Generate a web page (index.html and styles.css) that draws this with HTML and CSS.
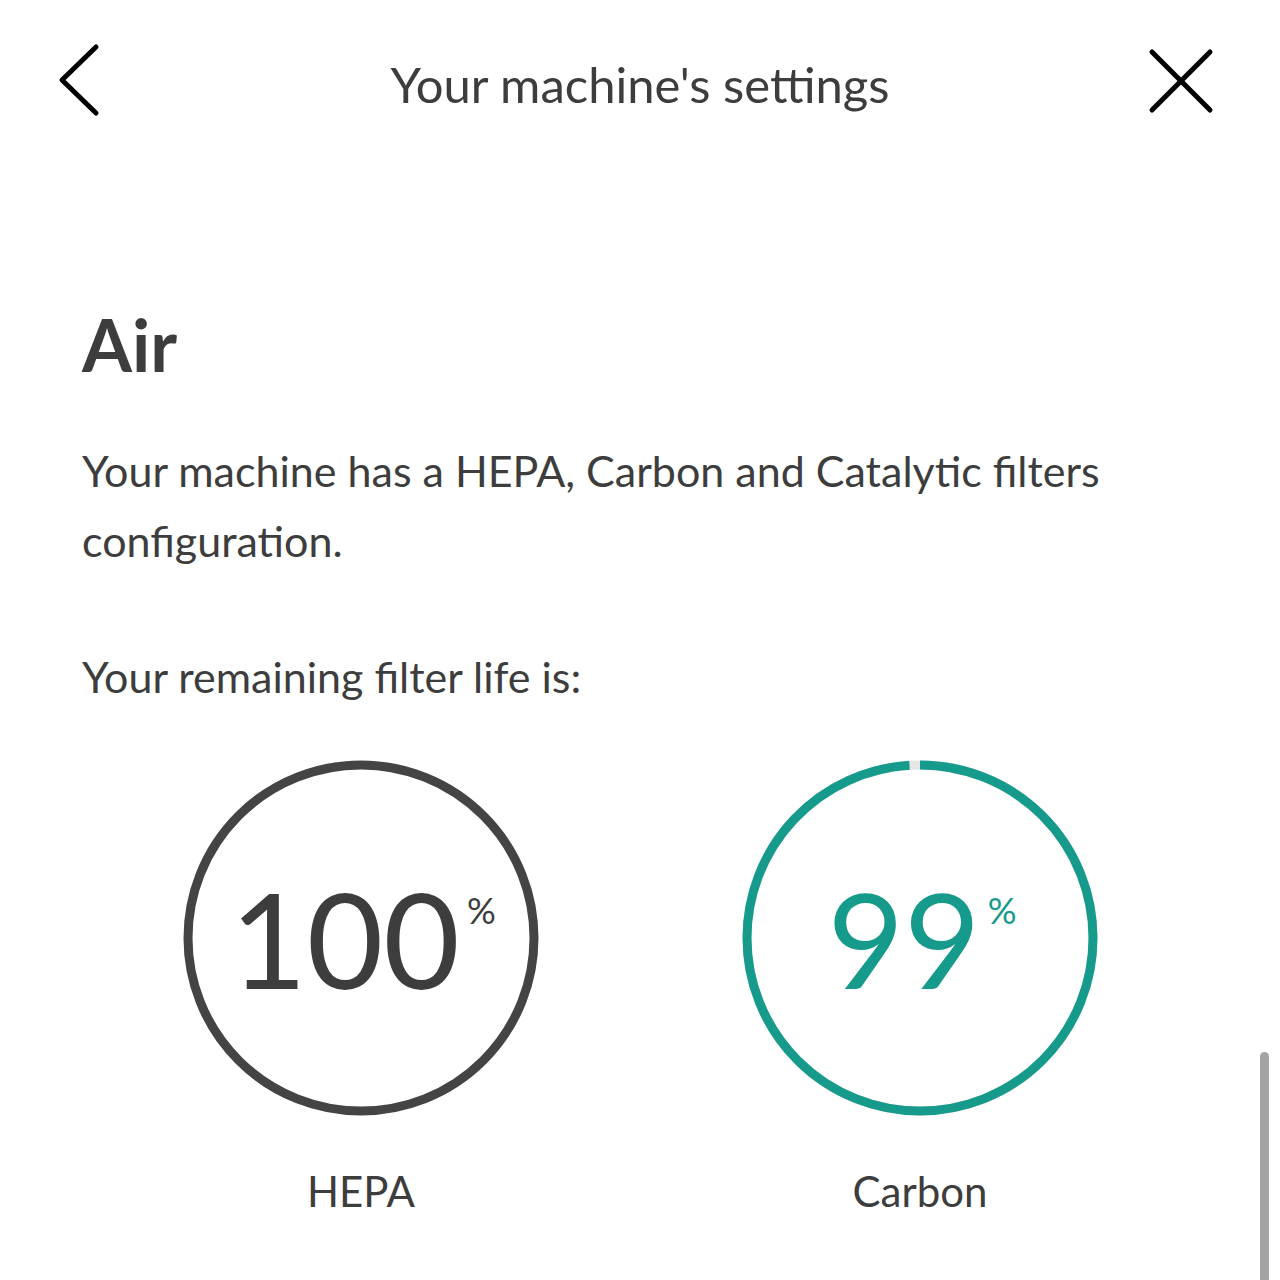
FILE: index.html
```html
<!DOCTYPE html>
<html lang="en">
  <head>
    <meta charset="UTF-8" />
    <meta name="viewport" content="width=device-width, initial-scale=1.0" />
    <title>Your machine's settings</title>
    <link rel="stylesheet" href="styles.css">
  </head>
  <body>
    <div class="screen">
      <header class="top-bar">
        <button class="icon-btn back-btn" aria-label="Back">
          <svg width="48" height="76" viewBox="0 0 48 76">
            <polyline points="38,4 4,37 38,70" fill="none" stroke="#000" stroke-width="5" stroke-linecap="round" stroke-linejoin="round" />
          </svg>
        </button>
        <h1 class="title">Your machine's settings</h1>
        <button class="icon-btn close-btn" aria-label="Close">
          <svg width="70" height="70" viewBox="0 0 70 70">
            <line x1="6" y1="6" x2="64" y2="64" stroke="#000" stroke-width="5" stroke-linecap="round" />
            <line x1="64" y1="6" x2="6" y2="64" stroke="#000" stroke-width="5" stroke-linecap="round" />
          </svg>
        </button>
      </header>

      <main class="content">
        <h2 class="section-title">Air</h2>
        <p class="text">Your machine has a HEPA, Carbon and Catalytic filters configuration.</p>
        <p class="text remaining">Your remaining filter life is:</p>

        <div class="gauges">
          <div class="gauge">
            <div class="ring">
              <svg width="356" height="356" viewBox="0 0 356 356">
                <circle cx="178" cy="178" r="173" fill="none" stroke="#444" stroke-width="9" />
              </svg>
              <div class="value">
                <span class="num">100</span><span class="pct">%</span>
              </div>
            </div>
            <div class="label">HEPA</div>
          </div>

          <div class="gauge teal">
            <div class="ring">
              <svg width="356" height="356" viewBox="0 0 356 356">
                <circle cx="178" cy="178" r="173" fill="none" stroke="#e6e6e6" stroke-width="9" />
                <!-- 99% of 2*pi*173 = 1087 -->
                <circle cx="178" cy="178" r="173" fill="none" stroke="#169a8b" stroke-width="9"
                  stroke-dasharray="1076 1087" transform="rotate(-90 178 178)" />
              </svg>
              <div class="value">
                <span class="num">99</span><span class="pct">%</span>
              </div>
            </div>
            <div class="label">Carbon</div>
          </div>
        </div>
      </main>

      <div class="scrollbar"></div>
    </div>
  </body>
</html>
```

FILE: styles.css
```css
body {
  margin: 0;
  background-color: #fff;
  font-family: Lato, "Liberation Sans", sans-serif;
  color: #3d3d3d;
}
.screen {
  position: relative;
  width: 1280px;
  height: 1280px;
  overflow: hidden;
}
.top-bar {
  display: grid;
  grid-template-columns: 1fr auto 1fr;
  align-items: center;
  height: 170px;
  padding: 0 64px 0 58px;
  box-sizing: border-box;
  margin-top: -4px;
}
.icon-btn {
  background: none;
  border: none;
  padding: 0;
  display: flex;
  cursor: pointer;
}
.close-btn {
  justify-self: end;
}
.title {
  margin: 0;
  padding-top: 6px;
  padding-left: 6px;
  font-size: 49px;
  font-weight: 400;
  color: #3d3d3d;
}
.content {
  padding: 138px 82px 0 82px;
}
.section-title {
  margin: 0;
  font-size: 72px;
  font-weight: 700;
  line-height: 80px;
}
.text {
  margin: 52px 0 0 0;
  font-size: 43px;
  line-height: 70px;
}
.remaining {
  margin-top: 66px;
}
.gauges {
  display: flex;
  gap: 203px;
  margin: 48px 0 0 101px;
}
.gauge {
  display: flex;
  flex-direction: column;
  align-items: center;
  width: 356px;
}
.ring {
  position: relative;
  width: 356px;
  height: 356px;
}
.ring svg {
  display: block;
}
.value {
  position: absolute;
  inset: 0;
  display: flex;
  justify-content: center;
  align-items: center;
  padding-left: 4px;
}
.num {
  font-size: 132px;
  font-weight: 400;
  line-height: 1;
  color: #3d3d3d;
}
.pct {
  font-size: 36px;
  align-self: flex-start;
  margin-top: 128px;
  margin-left: 7px;
  color: #3d3d3d;
}
.teal .num,
.teal .pct {
  color: #169a8b;
}
.label {
  margin-top: 45px;
  font-size: 42px;
  line-height: 60px;
}
.scrollbar {
  position: absolute;
  right: 11px;
  top: 1052px;
  width: 9px;
  height: 240px;
  border-radius: 5px;
  background-color: #a3a3a3;
}
```
